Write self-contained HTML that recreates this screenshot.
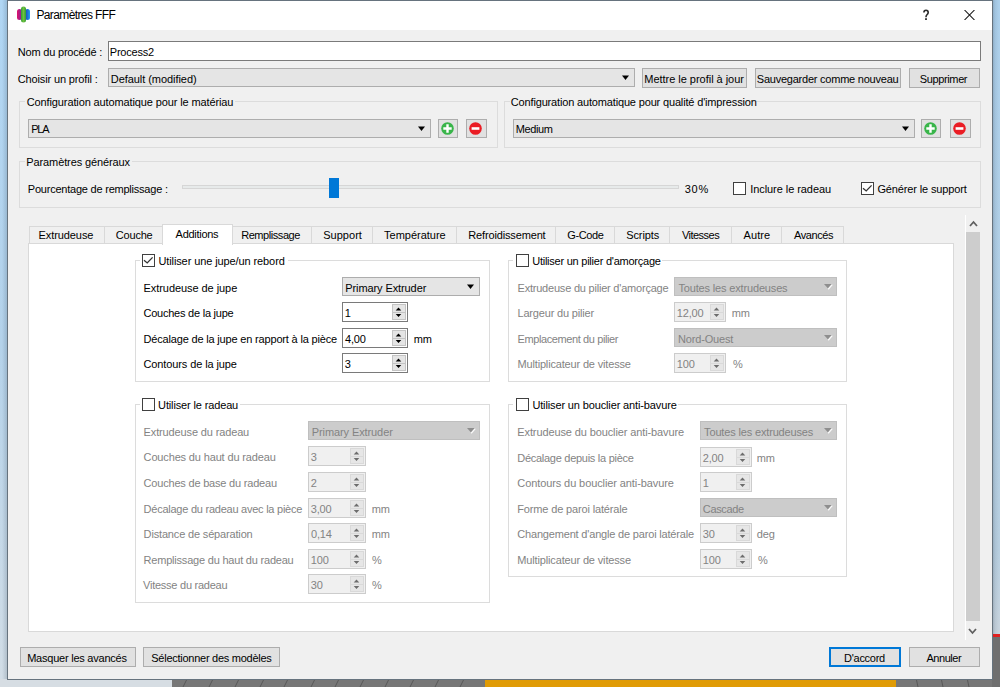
<!DOCTYPE html><html><head><meta charset="utf-8"><style>
html,body{margin:0;padding:0;width:1000px;height:687px;overflow:hidden;position:relative;background:#a9cfee;}
.t{position:absolute;font-family:'Liberation Sans', sans-serif;font-size:11px;line-height:13px;white-space:nowrap;letter-spacing:-0.2px;}
.b{position:absolute;}
</style></head><body>
<div class="b" style="left:0;top:0;width:8px;height:687px;background:linear-gradient(90deg,rgba(0,0,0,0) 0px,rgba(0,0,0,0) 2px,rgba(20,40,60,0.16) 7px),linear-gradient(180deg,#b0d6f4 0%,#b4d2ea 50%,#d2dde6 100%);"></div>
<div class="b" style="left:992px;top:0;width:8px;height:687px;background:linear-gradient(90deg,rgba(20,40,60,0.2) 1px,rgba(20,40,60,0.08) 3px,rgba(0,0,0,0) 7px),linear-gradient(180deg,#acd0ec 0%,#b8cfe0 80%,#c8d4de 92%);"></div>
<div class="b" style="left:0;top:679px;width:1000px;height:8px;background:#d6dde3;"></div>
<div class="b" style="left:172px;top:679px;width:828px;height:8px;background:#777777;"></div>
<div class="b" style="left:485px;top:679px;width:411px;height:8px;background:#e09b05;"></div>
<svg class="b" style="left:0;top:0" width="1000" height="687"><path d="M186.5 680 L183 687" stroke="#585858" stroke-width="1"/><path d="M212.5 680 L209 687" stroke="#585858" stroke-width="1"/><path d="M238.5 680 L235 687" stroke="#585858" stroke-width="1"/><path d="M263.5 680 L260 687" stroke="#585858" stroke-width="1"/><path d="M287.5 680 L284 687" stroke="#585858" stroke-width="1"/><path d="M314.5 680 L311 687" stroke="#585858" stroke-width="1"/><path d="M338.5 680 L335 687" stroke="#585858" stroke-width="1"/><path d="M363.5 680 L360 687" stroke="#585858" stroke-width="1"/><path d="M388.5 680 L385 687" stroke="#585858" stroke-width="1"/><path d="M413.5 680 L410 687" stroke="#585858" stroke-width="1"/><path d="M438.5 680 L435 687" stroke="#585858" stroke-width="1"/><path d="M463.5 680 L460 687" stroke="#585858" stroke-width="1"/></svg>
<svg class="b" style="left:896px;top:0" width="104" height="687"><path d="M20.5 680 L22 687" stroke="#585858" stroke-width="1"/><path d="M45.5 680 L47 687" stroke="#585858" stroke-width="1"/><path d="M71.5 680 L73 687" stroke="#585858" stroke-width="1"/></svg>
<div class="b" style="left:992px;top:636px;width:8px;height:51px;background:#6f6f6f;"></div>
<div class="b" style="left:992px;top:634px;width:8px;height:3px;background:#e02020;"></div>
<div class="b" style="left:7px;top:0px;width:986px;height:680px;background:#f0f0f0;border:1px solid #66737e;box-sizing:border-box;"></div>
<div class="b" style="left:8px;top:1px;width:984px;height:29px;background:#ffffff;"></div>
<svg class="b" style="left:16px;top:6px" width="16" height="17"><defs><linearGradient id="gm" x1="0" x2="1"><stop offset="0" stop-color="#e0106a"/><stop offset="1" stop-color="#7a2aa0"/></linearGradient><linearGradient id="gb" x1="0" x2="1"><stop offset="0" stop-color="#2040b0"/><stop offset="1" stop-color="#20a0f0"/></linearGradient><linearGradient id="gg" x1="0" x2="1"><stop offset="0" stop-color="#30a030"/><stop offset="0.5" stop-color="#70c040"/><stop offset="1" stop-color="#30a030"/></linearGradient></defs><rect x="1" y="3" width="5" height="11" rx="2.5" fill="url(#gm)"/><rect x="9" y="3" width="5" height="11" rx="2.5" fill="url(#gb)"/><rect x="5" y="0.5" width="5" height="16" rx="2.5" fill="url(#gg)"/></svg>
<div class="t" style="left:36.4px;top:9px;color:#000;letter-spacing:-0.615px;font-size:12px;">Paramètres FFF</div>
<svg class="b" style="left:922px;top:9px" width="8" height="12"><path d="M1.9 3.6 C1.9 2 2.8 1.2 4 1.2 C5.3 1.2 6.2 2.1 6.2 3.5 C6.2 4.8 5.3 5.4 4.7 6 C4.2 6.5 4 7 4 8.2" fill="none" stroke="#2b2b2b" stroke-width="1.6"/><rect x="3.1" y="9.2" width="1.8" height="1.8" fill="#2b2b2b"/></svg>
<svg class="b" style="left:964px;top:10px" width="11" height="10"><path d="M0.5 0 L10.5 10 M10.5 0 L0.5 10" stroke="#111" stroke-width="1.05"/></svg>
<div class="t" style="left:17.8px;top:46px;color:#000;letter-spacing:-0.2px;">Nom du procédé :</div>
<div class="b" style="left:108px;top:41px;width:873px;height:20px;background:#fff;border:1px solid #7a7a7a;box-sizing:border-box;"></div>
<div class="t" style="left:109.8px;top:46px;color:#000;letter-spacing:-0.214px;">Process2</div>
<div class="t" style="left:17.8px;top:73px;color:#000;letter-spacing:-0.139px;">Choisir un profil :</div>
<div class="b" style="left:108px;top:68px;width:527px;height:19px;background:#e5e5e5;border:1px solid #adadad;box-sizing:border-box;"></div>
<div class="t" style="left:110.8px;top:72.5px;color:#000;letter-spacing:-0.059px;">Default (modified)</div>
<svg class="b" style="left:622px;top:75px" width="8" height="6"><path d="M0 0.5 L7 0.5 L3.5 5 Z" fill="#000"/></svg>
<div class="b" style="left:642px;top:68px;width:105px;height:20px;background:#e1e1e1;border:1px solid #adadad;box-sizing:border-box;"></div>
<div class="t" style="left:644.3px;top:73px;color:#000;letter-spacing:-0.027px;">Mettre le profil à jour</div>
<div class="b" style="left:755px;top:68px;width:146px;height:20px;background:#e1e1e1;border:1px solid #adadad;box-sizing:border-box;"></div>
<div class="t" style="left:756.8px;top:73px;color:#000;letter-spacing:-0.229px;">Sauvegarder comme nouveau</div>
<div class="b" style="left:909px;top:68px;width:71px;height:20px;background:#e1e1e1;border:1px solid #adadad;box-sizing:border-box;"></div>
<div class="t" style="left:919.8px;top:73px;color:#000;letter-spacing:-0.375px;">Supprimer</div>
<div class="b" style="left:19px;top:101px;width:479px;height:47px;background:transparent;border:1px solid #dcdcdc;box-sizing:border-box;"></div>
<div class="b" style="left:25px;top:101px;width:210px;height:1px;background:#f0f0f0;"></div>
<div class="t" style="left:26.8px;top:96px;color:#000;letter-spacing:-0.122px;">Configuration automatique pour le matériau</div>
<div class="b" style="left:28px;top:119px;width:403px;height:19px;background:#e5e5e5;border:1px solid #adadad;box-sizing:border-box;"></div>
<div class="t" style="left:31.2px;top:123px;color:#000;letter-spacing:-1.25px;">PLA</div>
<svg class="b" style="left:418px;top:126px" width="8" height="6"><path d="M0 0.5 L7 0.5 L3.5 5 Z" fill="#000"/></svg>
<div class="b" style="left:438px;top:119px;width:20px;height:19px;background:#e1e1e1;border:1px solid #adadad;box-sizing:border-box;"></div>
<svg class="b" style="left:441.0px;top:122.0px" width="13" height="13"><circle cx="6.5" cy="6.5" r="6.3" fill="#39b54a"/><path d="M6.5 2.3 V10.7 M2.3 6.5 H10.7" stroke="#fff" stroke-width="2.4"/></svg>
<div class="b" style="left:466px;top:119px;width:21px;height:19px;background:#e1e1e1;border:1px solid #adadad;box-sizing:border-box;"></div>
<svg class="b" style="left:469.0px;top:122.0px" width="13" height="13"><circle cx="6.5" cy="6.5" r="6.3" fill="#ea1c24"/><path d="M2.6 6.5 H10.4" stroke="#fff" stroke-width="2.6"/></svg>
<div class="b" style="left:504px;top:101px;width:477px;height:47px;background:transparent;border:1px solid #dcdcdc;box-sizing:border-box;"></div>
<div class="b" style="left:510px;top:101px;width:228px;height:1px;background:#f0f0f0;"></div>
<div class="t" style="left:510.8px;top:96px;color:#000;letter-spacing:-0.16px;">Configuration automatique pour qualité d'impression</div>
<div class="b" style="left:513px;top:119px;width:402px;height:19px;background:#e5e5e5;border:1px solid #adadad;box-sizing:border-box;"></div>
<div class="t" style="left:515.8px;top:123px;color:#000;letter-spacing:-0.4px;">Medium</div>
<svg class="b" style="left:902px;top:126px" width="8" height="6"><path d="M0 0.5 L7 0.5 L3.5 5 Z" fill="#000"/></svg>
<div class="b" style="left:921px;top:119px;width:20px;height:19px;background:#e1e1e1;border:1px solid #adadad;box-sizing:border-box;"></div>
<svg class="b" style="left:924.0px;top:122.0px" width="13" height="13"><circle cx="6.5" cy="6.5" r="6.3" fill="#39b54a"/><path d="M6.5 2.3 V10.7 M2.3 6.5 H10.7" stroke="#fff" stroke-width="2.4"/></svg>
<div class="b" style="left:950px;top:119px;width:21px;height:19px;background:#e1e1e1;border:1px solid #adadad;box-sizing:border-box;"></div>
<svg class="b" style="left:953.0px;top:122.0px" width="13" height="13"><circle cx="6.5" cy="6.5" r="6.3" fill="#ea1c24"/><path d="M2.6 6.5 H10.4" stroke="#fff" stroke-width="2.6"/></svg>
<div class="b" style="left:19px;top:161px;width:962px;height:47px;background:transparent;border:1px solid #dcdcdc;box-sizing:border-box;"></div>
<div class="b" style="left:25px;top:161px;width:107px;height:1px;background:#f0f0f0;"></div>
<div class="t" style="left:26.3px;top:156px;color:#000;letter-spacing:-0.111px;">Paramètres généraux</div>
<div class="t" style="left:27.8px;top:183px;color:#000;letter-spacing:-0.222px;">Pourcentage de remplissage :</div>
<div class="b" style="left:182px;top:185px;width:497px;height:4px;background:#e7eaea;border:1px solid #d6d6d6;box-sizing:border-box;"></div>
<div class="b" style="left:329px;top:178px;width:10px;height:20px;background:#0078d7;"></div>
<div class="t" style="left:684.8px;top:183px;color:#000;letter-spacing:0.7px;">30%</div>
<div class="b" style="left:733px;top:182px;width:13px;height:13px;background:#fff;border:1px solid #404040;box-sizing:border-box;"></div>
<div class="t" style="left:750.2px;top:183px;color:#000;letter-spacing:-0.062px;">Inclure le radeau</div>
<div class="b" style="left:861px;top:182px;width:13px;height:13px;background:#fff;border:1px solid #404040;box-sizing:border-box;"></div>
<svg class="b" style="left:861px;top:182px" width="13" height="13"><path d="M2 6.3 L5.2 8.9 L10.6 3.4" fill="none" stroke="#333" stroke-width="1.35"/></svg>
<div class="t" style="left:877.4px;top:183px;color:#000;letter-spacing:-0.129px;">Générer le support</div>
<div class="b" style="left:28px;top:243px;width:926px;height:389px;background:#ffffff;border:1px solid #d9d9d9;box-sizing:border-box;"></div>
<div class="b" style="left:29px;top:226px;width:76px;height:18px;background:#f0f0f0;border:1px solid #d9d9d9;box-sizing:border-box;"></div>
<div class="t" style="left:38.5px;top:229px;color:#000;letter-spacing:-0.078px;">Extrudeuse</div>
<div class="b" style="left:104px;top:226px;width:59px;height:18px;background:#f0f0f0;border:1px solid #d9d9d9;box-sizing:border-box;"></div>
<div class="t" style="left:115.8px;top:229px;color:#000;letter-spacing:-0.2px;">Couche</div>
<div class="b" style="left:232px;top:226px;width:80px;height:18px;background:#f0f0f0;border:1px solid #d9d9d9;box-sizing:border-box;"></div>
<div class="t" style="left:241.2px;top:229px;color:#000;letter-spacing:-0.44px;">Remplissage</div>
<div class="b" style="left:311px;top:226px;width:62px;height:18px;background:#f0f0f0;border:1px solid #d9d9d9;box-sizing:border-box;"></div>
<div class="t" style="left:323.2px;top:229px;color:#000;letter-spacing:0.033px;">Support</div>
<div class="b" style="left:372px;top:226px;width:85px;height:18px;background:#f0f0f0;border:1px solid #d9d9d9;box-sizing:border-box;"></div>
<div class="t" style="left:384.1px;top:229px;color:#000;letter-spacing:-0.02px;">Température</div>
<div class="b" style="left:456px;top:226px;width:100px;height:18px;background:#f0f0f0;border:1px solid #d9d9d9;box-sizing:border-box;"></div>
<div class="t" style="left:468.3px;top:229px;color:#000;letter-spacing:-0.15px;">Refroidissement</div>
<div class="b" style="left:555px;top:226px;width:60px;height:18px;background:#f0f0f0;border:1px solid #d9d9d9;box-sizing:border-box;"></div>
<div class="t" style="left:567.3px;top:229px;color:#000;letter-spacing:-0.4px;">G-Code</div>
<div class="b" style="left:614px;top:226px;width:56px;height:18px;background:#f0f0f0;border:1px solid #d9d9d9;box-sizing:border-box;"></div>
<div class="t" style="left:626.2px;top:229px;color:#000;letter-spacing:-0.1px;">Scripts</div>
<div class="b" style="left:669px;top:226px;width:63px;height:18px;background:#f0f0f0;border:1px solid #d9d9d9;box-sizing:border-box;"></div>
<div class="t" style="left:681.9px;top:229px;color:#000;letter-spacing:-0.514px;">Vitesses</div>
<div class="b" style="left:731px;top:226px;width:51px;height:18px;background:#f0f0f0;border:1px solid #d9d9d9;box-sizing:border-box;"></div>
<div class="t" style="left:743.6px;top:229px;color:#000;letter-spacing:0.075px;">Autre</div>
<div class="b" style="left:781px;top:226px;width:63px;height:18px;background:#f0f0f0;border:1px solid #d9d9d9;box-sizing:border-box;"></div>
<div class="t" style="left:793.9px;top:229px;color:#000;letter-spacing:-0.4px;">Avancés</div>
<div class="b" style="left:162px;top:224px;width:71px;height:21px;background:#ffffff;border:1px solid #d9d9d9;box-sizing:border-box;border-bottom:none;"></div>
<div class="t" style="left:175.6px;top:228px;color:#000;letter-spacing:-0.287px;">Additions</div>
<div class="b" style="left:965px;top:215px;width:16px;height:425px;background:#f0f0f0;"></div>
<div class="b" style="left:965px;top:215px;width:1px;height:425px;background:#ffffff;"></div>
<div class="b" style="left:966px;top:232px;width:14px;height:389px;background:#cdcdcd;"></div>
<svg class="b" style="left:969px;top:220px" width="9" height="7"><path d="M1 6 L4.5 2 L8 6" fill="none" stroke="#606060" stroke-width="1.8"/></svg>
<svg class="b" style="left:968px;top:628px" width="9" height="7"><path d="M1 1 L4.5 5 L8 1" fill="none" stroke="#606060" stroke-width="1.8"/></svg>
<div class="b" style="left:135px;top:260px;width:355px;height:122px;background:#fff;border:1px solid #dcdcdc;box-sizing:border-box;"></div>
<div class="b" style="left:140px;top:260px;width:148px;height:1px;background:#fff;"></div>
<div class="b" style="left:142px;top:254px;width:13px;height:13px;background:#fff;border:1px solid #404040;box-sizing:border-box;"></div>
<svg class="b" style="left:142px;top:254px" width="13" height="13"><path d="M2 6.3 L5.2 8.9 L10.6 3.4" fill="none" stroke="#333" stroke-width="1.35"/></svg>
<div class="t" style="left:158.4px;top:255px;color:#000;letter-spacing:-0.1px;">Utiliser une jupe/un rebord</div>
<div class="t" style="left:143.5px;top:282px;color:#000;letter-spacing:-0.059px;">Extrudeuse de jupe</div>
<div class="t" style="left:143.5px;top:307px;color:#000;letter-spacing:-0.235px;">Couches de la jupe</div>
<div class="t" style="left:143.5px;top:333px;color:#000;letter-spacing:-0.175px;">Décalage de la jupe en rapport à la pièce</div>
<div class="t" style="left:143.5px;top:358px;color:#000;letter-spacing:-0.111px;">Contours de la jupe</div>
<div class="b" style="left:342px;top:277px;width:138px;height:19px;background:#e5e5e5;border:1px solid #adadad;box-sizing:border-box;"></div>
<div class="t" style="left:345.3px;top:282px;color:#000;letter-spacing:-0.1px;">Primary Extruder</div>
<svg class="b" style="left:467px;top:284px" width="8" height="6"><path d="M0 0.5 L7 0.5 L3.5 5 Z" fill="#000"/></svg>
<div class="b" style="left:342px;top:302px;width:66px;height:20px;background:#ffffff;border:1px solid #7a7a7a;box-sizing:border-box;"></div>
<div class="t" style="left:344.8px;top:307px;color:#000;">1</div>
<div class="b" style="left:392px;top:304px;width:14px;height:16px;background:#e5e5e5;border:1px solid #c4c4c4;box-sizing:border-box;"></div>
<div class="b" style="left:392px;top:312px;width:14px;height:1px;background:#c4c4c4;"></div>
<svg class="b" style="left:395px;top:306px" width="8" height="12"><path d="M0.7 4.5 L6.3 4.5 L3.5 1.5 Z M0.7 8 L6.3 8 L3.5 11 Z" fill="#000"/></svg>
<div class="b" style="left:342px;top:328px;width:66px;height:20px;background:#ffffff;border:1px solid #7a7a7a;box-sizing:border-box;"></div>
<div class="t" style="left:345.1px;top:333px;color:#000;">4,00</div>
<div class="b" style="left:392px;top:330px;width:14px;height:16px;background:#e5e5e5;border:1px solid #c4c4c4;box-sizing:border-box;"></div>
<div class="b" style="left:392px;top:338px;width:14px;height:1px;background:#c4c4c4;"></div>
<svg class="b" style="left:395px;top:332px" width="8" height="12"><path d="M0.7 4.5 L6.3 4.5 L3.5 1.5 Z M0.7 8 L6.3 8 L3.5 11 Z" fill="#000"/></svg>
<div class="t" style="left:413.8px;top:333px;color:#000;">mm</div>
<div class="b" style="left:342px;top:353px;width:66px;height:20px;background:#ffffff;border:1px solid #7a7a7a;box-sizing:border-box;"></div>
<div class="t" style="left:344.8px;top:358px;color:#000;">3</div>
<div class="b" style="left:392px;top:355px;width:14px;height:16px;background:#e5e5e5;border:1px solid #c4c4c4;box-sizing:border-box;"></div>
<div class="b" style="left:392px;top:363px;width:14px;height:1px;background:#c4c4c4;"></div>
<svg class="b" style="left:395px;top:357px" width="8" height="12"><path d="M0.7 4.5 L6.3 4.5 L3.5 1.5 Z M0.7 8 L6.3 8 L3.5 11 Z" fill="#000"/></svg>
<div class="b" style="left:508px;top:260px;width:339px;height:122px;background:#fff;border:1px solid #dcdcdc;box-sizing:border-box;"></div>
<div class="b" style="left:513px;top:260px;width:149px;height:1px;background:#fff;"></div>
<div class="b" style="left:516px;top:254px;width:13px;height:13px;background:#fff;border:1px solid #404040;box-sizing:border-box;"></div>
<div class="t" style="left:532.2px;top:255px;color:#000;letter-spacing:-0.239px;">Utiliser un pilier d'amorçage</div>
<div class="t" style="left:517.5px;top:282px;color:#838383;letter-spacing:-0.21px;">Extrudeuse du pilier d'amorçage</div>
<div class="t" style="left:517.5px;top:307px;color:#838383;letter-spacing:-0.181px;">Largeur du pilier</div>
<div class="t" style="left:517.5px;top:333px;color:#838383;letter-spacing:-0.395px;">Emplacement du pilier</div>
<div class="t" style="left:517.5px;top:358px;color:#838383;letter-spacing:-0.163px;">Multiplicateur de vitesse</div>
<div class="b" style="left:674px;top:277px;width:163px;height:19px;background:#cccccc;border:1px solid #bfbfbf;box-sizing:border-box;"></div>
<div class="t" style="left:678.4px;top:282px;color:#838383;letter-spacing:-0.157px;">Toutes les extrudeuses</div>
<svg class="b" style="left:824px;top:284px" width="10" height="7"><path d="M0 0 L8 0 L4 4.6 Z" fill="#8e8e8e"/><path d="M8.2 0.6 L4.2 5.2" stroke="#fafafa" stroke-width="1.3"/></svg>
<div class="b" style="left:674px;top:302px;width:52px;height:20px;background:#f0f0f0;border:1px solid #cccccc;box-sizing:border-box;"></div>
<div class="t" style="left:676.8px;top:307px;color:#838383;">12,00</div>
<div class="b" style="left:710px;top:304px;width:14px;height:16px;background:#e6e6e6;border:1px solid #d9d9d9;box-sizing:border-box;"></div>
<div class="b" style="left:710px;top:312px;width:14px;height:1px;background:#d9d9d9;"></div>
<svg class="b" style="left:713px;top:306px" width="8" height="12"><path d="M0.7 4.5 L6.3 4.5 L3.5 1.5 Z M0.7 8 L6.3 8 L3.5 11 Z" fill="#6d6d6d"/></svg>
<div class="t" style="left:731.8px;top:307px;color:#838383;">mm</div>
<div class="b" style="left:674px;top:328px;width:163px;height:19px;background:#cccccc;border:1px solid #bfbfbf;box-sizing:border-box;"></div>
<div class="t" style="left:678.1px;top:333px;color:#838383;letter-spacing:-0.178px;">Nord-Ouest</div>
<svg class="b" style="left:824px;top:335px" width="10" height="7"><path d="M0 0 L8 0 L4 4.6 Z" fill="#8e8e8e"/><path d="M8.2 0.6 L4.2 5.2" stroke="#fafafa" stroke-width="1.3"/></svg>
<div class="b" style="left:674px;top:353px;width:52px;height:20px;background:#f0f0f0;border:1px solid #cccccc;box-sizing:border-box;"></div>
<div class="t" style="left:676.8px;top:358px;color:#838383;">100</div>
<div class="b" style="left:710px;top:355px;width:14px;height:16px;background:#e6e6e6;border:1px solid #d9d9d9;box-sizing:border-box;"></div>
<div class="b" style="left:710px;top:363px;width:14px;height:1px;background:#d9d9d9;"></div>
<svg class="b" style="left:713px;top:357px" width="8" height="12"><path d="M0.7 4.5 L6.3 4.5 L3.5 1.5 Z M0.7 8 L6.3 8 L3.5 11 Z" fill="#6d6d6d"/></svg>
<div class="t" style="left:733.1px;top:358px;color:#838383;">%</div>
<div class="b" style="left:135px;top:404px;width:355px;height:199px;background:#fff;border:1px solid #dcdcdc;box-sizing:border-box;"></div>
<div class="b" style="left:140px;top:404px;width:100px;height:1px;background:#fff;"></div>
<div class="b" style="left:142px;top:398px;width:13px;height:13px;background:#fff;border:1px solid #404040;box-sizing:border-box;"></div>
<div class="t" style="left:158.1px;top:399px;color:#000;letter-spacing:-0.141px;">Utiliser le radeau</div>
<div class="t" style="left:143.6px;top:426px;color:#838383;letter-spacing:-0.137px;">Extrudeuse du radeau</div>
<div class="t" style="left:143.6px;top:451px;color:#838383;letter-spacing:-0.15px;">Couches du haut du radeau</div>
<div class="t" style="left:143.6px;top:477px;color:#838383;letter-spacing:-0.2px;">Couches de base du radeau</div>
<div class="t" style="left:143.6px;top:503px;color:#838383;letter-spacing:-0.245px;">Décalage du radeau avec la pièce</div>
<div class="t" style="left:143.6px;top:528px;color:#838383;letter-spacing:-0.162px;">Distance de séparation</div>
<div class="t" style="left:143.6px;top:554px;color:#838383;letter-spacing:-0.207px;">Remplissage du haut du radeau</div>
<div class="t" style="left:143.1px;top:579px;color:#838383;letter-spacing:-0.25px;">Vitesse du radeau</div>
<div class="b" style="left:308px;top:421px;width:172px;height:19px;background:#cccccc;border:1px solid #bfbfbf;box-sizing:border-box;"></div>
<div class="t" style="left:311.8px;top:426px;color:#838383;letter-spacing:-0.1px;">Primary Extruder</div>
<svg class="b" style="left:467px;top:428px" width="10" height="7"><path d="M0 0 L8 0 L4 4.6 Z" fill="#8e8e8e"/><path d="M8.2 0.6 L4.2 5.2" stroke="#fafafa" stroke-width="1.3"/></svg>
<div class="b" style="left:308px;top:446px;width:58px;height:20px;background:#f0f0f0;border:1px solid #cccccc;box-sizing:border-box;"></div>
<div class="t" style="left:310.8px;top:451px;color:#838383;">3</div>
<div class="b" style="left:350px;top:448px;width:14px;height:16px;background:#e6e6e6;border:1px solid #d9d9d9;box-sizing:border-box;"></div>
<div class="b" style="left:350px;top:456px;width:14px;height:1px;background:#d9d9d9;"></div>
<svg class="b" style="left:353px;top:450px" width="8" height="12"><path d="M0.7 4.5 L6.3 4.5 L3.5 1.5 Z M0.7 8 L6.3 8 L3.5 11 Z" fill="#6d6d6d"/></svg>
<div class="b" style="left:308px;top:472px;width:58px;height:20px;background:#f0f0f0;border:1px solid #cccccc;box-sizing:border-box;"></div>
<div class="t" style="left:310.8px;top:477px;color:#838383;">2</div>
<div class="b" style="left:350px;top:474px;width:14px;height:16px;background:#e6e6e6;border:1px solid #d9d9d9;box-sizing:border-box;"></div>
<div class="b" style="left:350px;top:482px;width:14px;height:1px;background:#d9d9d9;"></div>
<svg class="b" style="left:353px;top:476px" width="8" height="12"><path d="M0.7 4.5 L6.3 4.5 L3.5 1.5 Z M0.7 8 L6.3 8 L3.5 11 Z" fill="#6d6d6d"/></svg>
<div class="b" style="left:308px;top:498px;width:58px;height:20px;background:#f0f0f0;border:1px solid #cccccc;box-sizing:border-box;"></div>
<div class="t" style="left:310.8px;top:503px;color:#838383;">3,00</div>
<div class="b" style="left:350px;top:500px;width:14px;height:16px;background:#e6e6e6;border:1px solid #d9d9d9;box-sizing:border-box;"></div>
<div class="b" style="left:350px;top:508px;width:14px;height:1px;background:#d9d9d9;"></div>
<svg class="b" style="left:353px;top:502px" width="8" height="12"><path d="M0.7 4.5 L6.3 4.5 L3.5 1.5 Z M0.7 8 L6.3 8 L3.5 11 Z" fill="#6d6d6d"/></svg>
<div class="t" style="left:371.8px;top:503px;color:#838383;">mm</div>
<div class="b" style="left:308px;top:523px;width:58px;height:20px;background:#f0f0f0;border:1px solid #cccccc;box-sizing:border-box;"></div>
<div class="t" style="left:311.1px;top:528px;color:#838383;">0,14</div>
<div class="b" style="left:350px;top:525px;width:14px;height:16px;background:#e6e6e6;border:1px solid #d9d9d9;box-sizing:border-box;"></div>
<div class="b" style="left:350px;top:533px;width:14px;height:1px;background:#d9d9d9;"></div>
<svg class="b" style="left:353px;top:527px" width="8" height="12"><path d="M0.7 4.5 L6.3 4.5 L3.5 1.5 Z M0.7 8 L6.3 8 L3.5 11 Z" fill="#6d6d6d"/></svg>
<div class="t" style="left:371.8px;top:528px;color:#838383;">mm</div>
<div class="b" style="left:308px;top:549px;width:58px;height:20px;background:#f0f0f0;border:1px solid #cccccc;box-sizing:border-box;"></div>
<div class="t" style="left:310.8px;top:554px;color:#838383;">100</div>
<div class="b" style="left:350px;top:551px;width:14px;height:16px;background:#e6e6e6;border:1px solid #d9d9d9;box-sizing:border-box;"></div>
<div class="b" style="left:350px;top:559px;width:14px;height:1px;background:#d9d9d9;"></div>
<svg class="b" style="left:353px;top:553px" width="8" height="12"><path d="M0.7 4.5 L6.3 4.5 L3.5 1.5 Z M0.7 8 L6.3 8 L3.5 11 Z" fill="#6d6d6d"/></svg>
<div class="t" style="left:372.1px;top:554px;color:#838383;">%</div>
<div class="b" style="left:308px;top:574px;width:58px;height:20px;background:#f0f0f0;border:1px solid #cccccc;box-sizing:border-box;"></div>
<div class="t" style="left:310.8px;top:579px;color:#838383;">30</div>
<div class="b" style="left:350px;top:576px;width:14px;height:16px;background:#e6e6e6;border:1px solid #d9d9d9;box-sizing:border-box;"></div>
<div class="b" style="left:350px;top:584px;width:14px;height:1px;background:#d9d9d9;"></div>
<svg class="b" style="left:353px;top:578px" width="8" height="12"><path d="M0.7 4.5 L6.3 4.5 L3.5 1.5 Z M0.7 8 L6.3 8 L3.5 11 Z" fill="#6d6d6d"/></svg>
<div class="t" style="left:372.1px;top:579px;color:#838383;">%</div>
<div class="b" style="left:508px;top:404px;width:339px;height:173px;background:#fff;border:1px solid #dcdcdc;box-sizing:border-box;"></div>
<div class="b" style="left:513px;top:404px;width:165px;height:1px;background:#fff;"></div>
<div class="b" style="left:516px;top:398px;width:13px;height:13px;background:#fff;border:1px solid #404040;box-sizing:border-box;"></div>
<div class="t" style="left:532.4px;top:399px;color:#000;letter-spacing:-0.135px;">Utiliser un bouclier anti-bavure</div>
<div class="t" style="left:517.3px;top:426px;color:#838383;letter-spacing:-0.115px;">Extrudeuse du bouclier anti-bavure</div>
<div class="t" style="left:517.3px;top:452px;color:#838383;letter-spacing:-0.278px;">Décalage depuis la pièce</div>
<div class="t" style="left:517.3px;top:477px;color:#838383;letter-spacing:-0.097px;">Contours du bouclier anti-bavure</div>
<div class="t" style="left:517.3px;top:503px;color:#838383;letter-spacing:-0.15px;">Forme de paroi latérale</div>
<div class="t" style="left:517.3px;top:528px;color:#838383;letter-spacing:-0.18px;">Changement d'angle de paroi latérale</div>
<div class="t" style="left:517.3px;top:554px;color:#838383;letter-spacing:-0.15px;">Multiplicateur de vitesse</div>
<div class="b" style="left:700px;top:421px;width:137px;height:19px;background:#cccccc;border:1px solid #bfbfbf;box-sizing:border-box;"></div>
<div class="t" style="left:704.1px;top:426px;color:#838383;letter-spacing:-0.157px;">Toutes les extrudeuses</div>
<svg class="b" style="left:824px;top:428px" width="10" height="7"><path d="M0 0 L8 0 L4 4.6 Z" fill="#8e8e8e"/><path d="M8.2 0.6 L4.2 5.2" stroke="#fafafa" stroke-width="1.3"/></svg>
<div class="b" style="left:700px;top:447px;width:52px;height:20px;background:#f0f0f0;border:1px solid #cccccc;box-sizing:border-box;"></div>
<div class="t" style="left:702.8px;top:452px;color:#838383;">2,00</div>
<div class="b" style="left:736px;top:449px;width:14px;height:16px;background:#e6e6e6;border:1px solid #d9d9d9;box-sizing:border-box;"></div>
<div class="b" style="left:736px;top:457px;width:14px;height:1px;background:#d9d9d9;"></div>
<svg class="b" style="left:739px;top:451px" width="8" height="12"><path d="M0.7 4.5 L6.3 4.5 L3.5 1.5 Z M0.7 8 L6.3 8 L3.5 11 Z" fill="#6d6d6d"/></svg>
<div class="t" style="left:756.8px;top:452px;color:#838383;">mm</div>
<div class="b" style="left:700px;top:472px;width:52px;height:20px;background:#f0f0f0;border:1px solid #cccccc;box-sizing:border-box;"></div>
<div class="t" style="left:702.8px;top:477px;color:#838383;">1</div>
<div class="b" style="left:736px;top:474px;width:14px;height:16px;background:#e6e6e6;border:1px solid #d9d9d9;box-sizing:border-box;"></div>
<div class="b" style="left:736px;top:482px;width:14px;height:1px;background:#d9d9d9;"></div>
<svg class="b" style="left:739px;top:476px" width="8" height="12"><path d="M0.7 4.5 L6.3 4.5 L3.5 1.5 Z M0.7 8 L6.3 8 L3.5 11 Z" fill="#6d6d6d"/></svg>
<div class="b" style="left:700px;top:498px;width:137px;height:19px;background:#cccccc;border:1px solid #bfbfbf;box-sizing:border-box;"></div>
<div class="t" style="left:702.8px;top:503px;color:#838383;letter-spacing:-0.333px;">Cascade</div>
<svg class="b" style="left:824px;top:505px" width="10" height="7"><path d="M0 0 L8 0 L4 4.6 Z" fill="#8e8e8e"/><path d="M8.2 0.6 L4.2 5.2" stroke="#fafafa" stroke-width="1.3"/></svg>
<div class="b" style="left:700px;top:523px;width:52px;height:20px;background:#f0f0f0;border:1px solid #cccccc;box-sizing:border-box;"></div>
<div class="t" style="left:702.8px;top:528px;color:#838383;">30</div>
<div class="b" style="left:736px;top:525px;width:14px;height:16px;background:#e6e6e6;border:1px solid #d9d9d9;box-sizing:border-box;"></div>
<div class="b" style="left:736px;top:533px;width:14px;height:1px;background:#d9d9d9;"></div>
<svg class="b" style="left:739px;top:527px" width="8" height="12"><path d="M0.7 4.5 L6.3 4.5 L3.5 1.5 Z M0.7 8 L6.3 8 L3.5 11 Z" fill="#6d6d6d"/></svg>
<div class="t" style="left:756.8px;top:528px;color:#838383;">deg</div>
<div class="b" style="left:700px;top:549px;width:52px;height:20px;background:#f0f0f0;border:1px solid #cccccc;box-sizing:border-box;"></div>
<div class="t" style="left:702.8px;top:554px;color:#838383;">100</div>
<div class="b" style="left:736px;top:551px;width:14px;height:16px;background:#e6e6e6;border:1px solid #d9d9d9;box-sizing:border-box;"></div>
<div class="b" style="left:736px;top:559px;width:14px;height:1px;background:#d9d9d9;"></div>
<svg class="b" style="left:739px;top:553px" width="8" height="12"><path d="M0.7 4.5 L6.3 4.5 L3.5 1.5 Z M0.7 8 L6.3 8 L3.5 11 Z" fill="#6d6d6d"/></svg>
<div class="t" style="left:758.1px;top:554px;color:#838383;">%</div>
<div class="b" style="left:20px;top:647px;width:116px;height:20px;background:#e1e1e1;border:1px solid #adadad;box-sizing:border-box;"></div>
<div class="t" style="left:27.2px;top:652px;color:#000;letter-spacing:-0.233px;">Masquer les avancés</div>
<div class="b" style="left:143px;top:647px;width:137px;height:20px;background:#e1e1e1;border:1px solid #adadad;box-sizing:border-box;"></div>
<div class="t" style="left:151.3px;top:652px;color:#000;letter-spacing:-0.261px;">Sélectionner des modèles</div>
<div class="b" style="left:829px;top:647px;width:72px;height:20px;background:#e1e1e1;border:2px solid #0078d7;box-sizing:border-box;"></div>
<div class="t" style="left:844.1px;top:652px;color:#000;letter-spacing:-0.286px;">D'accord</div>
<div class="b" style="left:909px;top:647px;width:71px;height:20px;background:#e1e1e1;border:1px solid #adadad;box-sizing:border-box;"></div>
<div class="t" style="left:926.4px;top:652px;color:#000;letter-spacing:-0.433px;">Annuler</div>
</body></html>
